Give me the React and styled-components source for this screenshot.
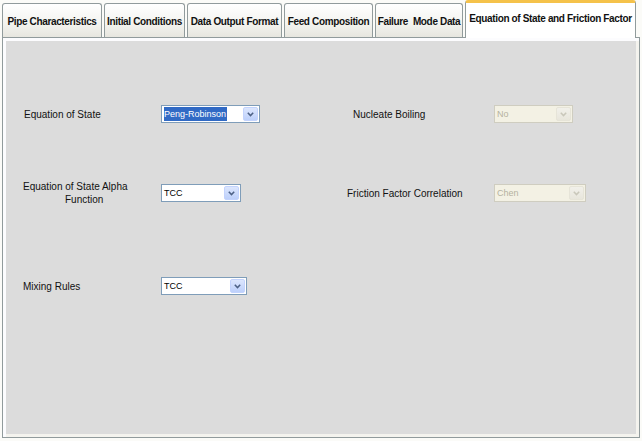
import React from 'react';
import styled, { createGlobalStyle, css } from 'styled-components';

const GlobalStyle = createGlobalStyle`
  html, body {
    margin: 0;
    padding: 0;
    background: #fbfbf8;
  }
  body {
    font-family: 'Liberation Sans', Arial, sans-serif;
    font-size: 10px;
    color: #000;
  }
`;

const Window = styled.div`
  width: 642px;
  height: 441px;
  display: flex;
  flex-direction: column;
  box-sizing: border-box;
  padding: 0 2px 3px 2px;
`;

const TabStrip = styled.div`
  display: flex;
  align-items: flex-end;
  gap: 2px;
  height: 37px;
  flex-shrink: 0;
`;

const Tab = styled.div`
  box-sizing: border-box;
  width: ${(p) => p.$width}px;
  height: 34px;
  display: flex;
  align-items: center;
  justify-content: center;
  font-weight: bold;
  font-size: 10px;
  letter-spacing: -0.35px;
  white-space: pre;
  color: #111;
  border: 1px solid #919b9c;
  border-bottom: none;
  border-radius: 3px 3px 0 0;
  background: linear-gradient(#ffffff, #f3f3ef 60%, #e7e6df);
  padding-top: 1px;

  ${(p) =>
    p.$active &&
    css`
      height: 38px;
      position: relative;
      z-index: 1;
      margin-bottom: -1px;
      background: #fff;
      border-top: 3px solid #f5c24a;
      padding-top: 0;
      padding-bottom: 4px;
    `}
`;

const Panel = styled.div`
  flex: 1;
  box-sizing: border-box;
  width: 638px;
  background: #dcdcdc;
  border: 1px solid #919b9c;
  box-shadow: inset 3px 3px 0 #fcfcfe, inset -3px -3px 0 #f4f3ee;
  padding: 62px 0 0 20px;
`;

const FormGrid = styled.div`
  display: grid;
  grid-template-columns: 324px auto;
`;

const Column = styled.div`
  display: flex;
  flex-direction: column;
`;

const Field = styled.div`
  display: flex;
  align-items: center;
  height: 28px;
  margin-top: ${(p) => p.$top || 0}px;
`;

const Label = styled.div`
  box-sizing: border-box;
  width: ${(p) => p.$width}px;
  padding-left: ${(p) => p.$indent || 0}px;
  line-height: 13px;
  font-size: 10px;
  color: #111;
`;

const LabelLine = styled.div`
  padding-left: ${(p) => p.$indent || 0}px;
`;

const Combo = styled.div`
  box-sizing: border-box;
  width: ${(p) => p.$width}px;
  height: 18px;
  display: flex;
  align-items: center;
  border: 1px solid ${(p) => (p.$disabled ? '#cfcdc0' : '#7f9db9')};
  background: ${(p) => (p.$disabled ? '#f3f1e4' : '#fff')};
  padding: 1px;
`;

const ComboText = styled.span`
  flex: 1;
  display: flex;
  align-items: center;
  height: 100%;
  font-size: 9px;
  white-space: nowrap;
  overflow: hidden;
  color: ${(p) => (p.$disabled ? '#b5b29f' : '#000')};
  padding-left: 1px;
`;

const Selected = styled.span`
  background: #316ac5;
  color: #fff;
  height: 14px;
  line-height: 14px;
  padding-right: 1px;
`;

const ArrowButton = styled.span`
  box-sizing: border-box;
  width: 15px;
  height: 14px;
  flex-shrink: 0;
  display: flex;
  align-items: center;
  justify-content: center;
  border-radius: 2px;
  background: ${(p) =>
    p.$disabled
      ? 'linear-gradient(#f1f0ea, #e8e6dc)'
      : 'linear-gradient(#dce6fd, #bdd0fb)'};
  border: 1px solid ${(p) => (p.$disabled ? '#e6e4d8' : '#c3d3fd')};
`;

const Chevron = ({ disabled }) => (
  <svg width="7" height="5" viewBox="0 0 7 5">
    <path
      d="M0.8 0.8 L3.5 3.6 L6.2 0.8"
      fill="none"
      stroke={disabled ? '#c9c7ba' : '#4d6185'}
      strokeWidth="1.5"
    />
  </svg>
);

const ComboBox = ({ value, width, selected, disabled }) => (
  <Combo $width={width} $disabled={disabled}>
    <ComboText $disabled={disabled}>
      {selected ? <Selected>{value}</Selected> : value}
    </ComboText>
    <ArrowButton $disabled={disabled}>
      <Chevron disabled={disabled} />
    </ArrowButton>
  </Combo>
);

const tabs = [
  { name: 'Pipe Characteristics', width: 100 },
  { name: 'Initial Conditions', width: 81 },
  { name: 'Data Output Format', width: 95 },
  { name: 'Feed Composition', width: 89 },
  { name: 'Failure  Mode Data', width: 88 },
  { name: 'Equation of State and Friction Factor', width: 171, active: true },
];

export default function App() {
  return (
    <>
      <GlobalStyle />
      <Window>
        <TabStrip>
          {tabs.map((t) => (
            <Tab key={t.name} $width={t.width} $active={t.active}>
              {t.name}
            </Tab>
          ))}
        </TabStrip>
        <Panel>
          <FormGrid>
            <Column>
              <Field>
                <Label $width={138} $indent={1}>Equation of State</Label>
                <ComboBox value="Peng-Robinson" width={99} selected />
              </Field>
              <Field $top={51}>
                <Label $width={138}>
                  <LabelLine>Equation of State Alpha</LabelLine>
                  <LabelLine $indent={42}>Function</LabelLine>
                </Label>
                <ComboBox value="TCC" width={80} />
              </Field>
              <Field $top={65}>
                <Label $width={138}>Mixing Rules</Label>
                <ComboBox value="TCC" width={86} />
              </Field>
            </Column>
            <Column>
              <Field>
                <Label $width={147} $indent={6}>Nucleate Boiling</Label>
                <ComboBox value="No" width={79} disabled />
              </Field>
              <Field $top={51}>
                <Label $width={147}>Friction Factor Correlation</Label>
                <ComboBox value="Chen" width={92} disabled />
              </Field>
            </Column>
          </FormGrid>
        </Panel>
      </Window>
    </>
  );
}
